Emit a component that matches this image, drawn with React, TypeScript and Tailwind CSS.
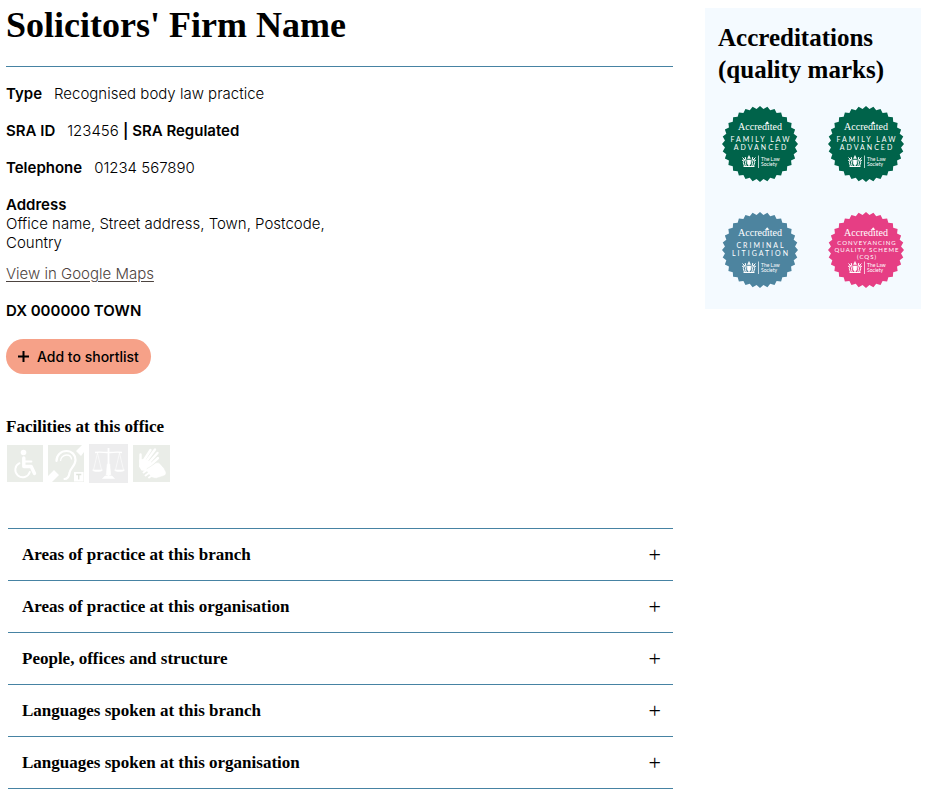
import React, { useState } from "react";

interface Seal {
  color: string;
  lines: string[];
  small?: boolean;
}

const seals: Seal[] = [
  { color: "#00634a", lines: ["FAMILY LAW", "ADVANCED"] },
  { color: "#00634a", lines: ["FAMILY LAW", "ADVANCED"] },
  { color: "#4d849f", lines: ["CRIMINAL", "LITIGATION"] },
  { color: "#e63e84", lines: ["CONVEYANCING", "QUALITY SCHEME", "(CQS)"], small: true },
];

const sections = [
  "Areas of practice at this branch",
  "Areas of practice at this organisation",
  "People, offices and structure",
  "Languages spoken at this branch",
  "Languages spoken at this organisation",
];

const TEETH = 32;

const sealPoints = Array.from({ length: TEETH * 2 }, (_, i) => {
  const radius = i % 2 === 0 ? 38 : 35.2;
  const angle = (Math.PI * i) / TEETH - Math.PI / 2;
  return `${(38 + radius * Math.cos(angle)).toFixed(2)},${(38 + radius * Math.sin(angle)).toFixed(2)}`;
}).join(" ");

function AccreditationSeal({ color, lines, small }: Seal) {
  return (
    <svg viewBox="0 0 76 76" className="w-[76px] h-[76px]" role="img" aria-label={`Accredited ${lines.join(" ")}`}>
      <polygon points={sealPoints} fill={color} />
      <g fill="#fff" textAnchor="middle">
        <text x="38" y="24" className="font-['Liberation_Serif',serif] text-[10px]">
          Accredited
        </text>
        <path d="M45.2 15.2l1.5 1.7-1.500 1.700-1.500-1.700z" />
        {lines.map((line, i) => (
          <text
            key={line}
            x="39"
            y={small ? 33 + i * 7 : 36 + i * 8}
            className={
              small
                ? "font-['Lato',sans-serif] text-[6px] tracking-[1px]"
                : "font-['Lato',sans-serif] text-[7px] tracking-[2px]"
            }
          >
            {line}
          </text>
        ))}
      </g>
      {/* crest */}
      <g stroke="#fff" fill="none" strokeWidth="1">
        <path d="M20.500 51.500l2 2-1.200 3 1.200 4M23.200 51l.8 3.500-.6 3 1 3M33.500 51.500l-2 2 1.200 3-1.200 4M30.800 51l-.8 3.500.6 3-1 3" />
        <path d="M20 54.500l3-1M34 54.500l-3-1M21.500 60.500h11" />
        <path d="M25.200 54h3.600v3.500L27 60l-1.800-2.500z" fill="#fff" strokeWidth="0.500" />
        <path d="M25.500 52.500l1.500-3 1.500 3z" fill="#fff" strokeWidth="0.500" />
      </g>
      <path d="M36.500 49.500v12.500" stroke="#fff" strokeWidth="0.700" />
      <g fill="#fff" className="font-['Lato',sans-serif] text-[5px]">
        <text x="39" y="55">The Law</text>
        <text x="39" y="60">Society</text>
      </g>
    </svg>
  );
}

function WheelchairIcon() {
  return (
    <svg viewBox="0 0 36 37" className="w-9 h-[37px]" role="img" aria-label="Wheelchair access">
      <rect width="36" height="37" fill="#eaede8" />
      <g fill="none" stroke="#fff" strokeLinecap="round" strokeLinejoin="round">
        <circle cx="16.500" cy="7.500" r="2.800" fill="#fff" stroke="none" />
        <path d="M16.800 13v8.500h7.400l3.300 7" strokeWidth="3.400" />
        <path d="M17 16.500h7.500" strokeWidth="1.800" />
        <path d="M12.500 18.200a7.400 7.400 0 1 0 10.300 8.800" strokeWidth="1.900" />
      </g>
    </svg>
  );
}

function HearingLoopIcon() {
  return (
    <svg viewBox="0 0 36 37" className="w-9 h-[37px]" role="img" aria-label="Hearing loop">
      <rect width="36" height="37" fill="#eaede8" />
      <path d="M28 6l6-6h2v7l-3 4zM0 31l6-6 5 5-7 7H0z" fill="#fff" />
      <path
        d="M8.500 16c0-6 4.500-10 10-10s9 4 9 9c0 6-5.500 8-6 13-.5 3.500-2 6-5 6"
        fill="none"
        stroke="#fff"
        strokeWidth="2.200"
        strokeLinecap="round"
      />
      <path d="M12.500 16c0-3.500 2.800-6 6-6s5 2 5 4.500" fill="none" stroke="#fff" strokeWidth="1.300" />
      <rect x="26" y="27" width="9.500" height="9.500" fill="#fff" />
      <path d="M28.200 29.500h5.100M30.750 29.500v5" stroke="#dfe3dc" strokeWidth="1.300" />
    </svg>
  );
}

function ScalesIcon() {
  return (
    <svg viewBox="0 0 39 39" className="w-[39px] h-[39px]" role="img" aria-label="Legal aid">
      <rect width="39" height="39" fill="#ededee" />
      <g fill="none" stroke="#fff" strokeWidth="0.600">
        <path d="M6 8.500c4-1 9 0 13.500 0s9.500-1 13.500 0" strokeWidth="1.300" />
        <path d="M8.500 9l-4 17M8.500 9l4 17M30.500 9l-4 17M30.500 9l4 17" />
        <path d="M3.500 26h10c-1 2-9 2-10 0zM25.500 26h10c-1 2-9 2-10 0z" fill="#fff" />
        <path d="M19.500 4v29" strokeWidth="1.800" />
        <path d="M18.300 20h2.400l1 11h-4.400z" fill="#fff" />
        <path d="M13.500 34.500h12l-2.500-2.500h-7z" fill="#fff" />
      </g>
    </svg>
  );
}

function SignLanguageIcon() {
  return (
    <svg viewBox="0 0 37 37" className="w-[37px] h-[37px]" role="img" aria-label="Sign language">
      <rect width="37" height="37" fill="#eaede8" />
      {/* open hand, fingers up and to the right */}
      <g stroke="#fff" strokeWidth="2.400" strokeLinecap="round" fill="none">
        <path d="M11 15l6.500-10M13.500 16l8.500-11.500M16 17.500l8.500-9.500M17.500 20l7.500-7M7.500 17V9.500" />
      </g>
      <path d="M6.300 14.500l4.500-.5 7 2.500 1.500 4-5.300 5.500-5.500-.500-2.500-4z" fill="#fff" />
      {/* second hand, fingers down and to the left */}
      <g stroke="#eaede8" strokeWidth="0.600" fill="#fff">
        <path d="M16 22.500l6.500-4.500c2-.8 4-.3 5 1.200l3.500 4 2 3.800c.3 2-.5 3.500-2.500 4l-7 2.300c-3 .2-5.500-1-7-3.300l-3-4c-.4-1.800 1.200-3.300 2.500-3.500z" />
      </g>
      <path d="M14 25l-3.500 2.500M16 28l-3.500 2.500M19 30.500l-3 2" stroke="#fff" strokeWidth="2" strokeLinecap="round" />
    </svg>
  );
}

function Detail({ label, children }: { label: string; children: React.ReactNode }) {
  return (
    <div className="flex gap-3">
      <dt className="font-semibold text-black">{label}</dt>
      <dd>{children}</dd>
    </div>
  );
}

export default function App() {
  const [open, setOpen] = useState<string | null>(null);
  const [shortlisted, setShortlisted] = useState(false);

  return (
    <div className="flex items-start gap-8 pl-[6px] pr-[7px] bg-white text-black font-['Inter',sans-serif] text-[15px] leading-[19px]">
      <main className="flex-1 min-w-0">
        <h1 className="pt-1 pb-5 border-b border-[#4683a3] font-['Liberation_Serif',serif] font-bold text-[36px] leading-[42px]">
          Solicitors' Firm Name
        </h1>

        <dl className="mt-[17px] space-y-[18px] font-light">
          <Detail label="Type">Recognised body law practice</Detail>
          <Detail label="SRA ID">
            123456 <strong className="font-semibold text-black">| SRA Regulated</strong>
          </Detail>
          <Detail label="Telephone">01234 567890</Detail>
          <div className="max-w-[336px]">
            <dt className="font-semibold text-black">Address</dt>
            <dd>Office name, Street address, Town, Postcode, Country</dd>
          </div>
        </dl>
        <a href="#map" className="inline-block mt-3 font-light text-[#4d4440] underline underline-offset-2">
          View in Google Maps
        </a>
        <p className="mt-[18px] font-semibold">DX 000000 TOWN</p>

        <button
          type="button"
          aria-pressed={shortlisted}
          onClick={() => setShortlisted(!shortlisted)}
          className="mt-[19px] flex items-center gap-2 h-[35px] px-3 rounded-full bg-[#f6a188] font-medium text-[14px] hover:bg-[#f08f73]"
        >
          <svg viewBox="0 0 11 11" className="w-[11px] h-[11px]" aria-hidden="true">
            <path d="M5.500 0v11M0 5.500h11" stroke="currentColor" strokeWidth="2" />
          </svg>
          Add to shortlist
        </button>

        <h2 className="mt-[43px] font-['Liberation_Serif',serif] font-bold text-[17px] leading-5">
          Facilities at this office
        </h2>
        <div className="mt-[7px] ml-px flex items-center gap-[5px]">
          <WheelchairIcon />
          <HearingLoopIcon />
          <ScalesIcon />
          <SignLanguageIcon />
        </div>

        <div className="mt-[45px] ml-[2px] border-t border-[#4683a3]">
          {sections.map((title) => (
            <h3 key={title} className="border-b border-[#4683a3] font-['Liberation_Serif',serif] font-bold text-[17px]">
              <button
                type="button"
                aria-expanded={open === title}
                onClick={() => setOpen(open === title ? null : title)}
                className="w-full h-[51px] pl-[14px] pr-3 flex items-center justify-between text-left"
              >
                {title}
                <span className="font-normal text-[22px]">{open === title ? "−" : "+"}</span>
              </button>
            </h3>
          ))}
        </div>
      </main>

      <aside className="w-[216px] shrink-0 mt-2 px-[13px] pt-[14px] pb-[21px] bg-[#f4faff]">
        <h2 className="font-['Liberation_Serif',serif] font-bold text-[25px] leading-8">
          Accreditations (quality marks)
        </h2>
        <div className="mt-5 px-1 grid grid-cols-2 gap-[30px]">
          {seals.map((seal, i) => (
            <AccreditationSeal key={i} {...seal} />
          ))}
        </div>
      </aside>
    </div>
  );
}
